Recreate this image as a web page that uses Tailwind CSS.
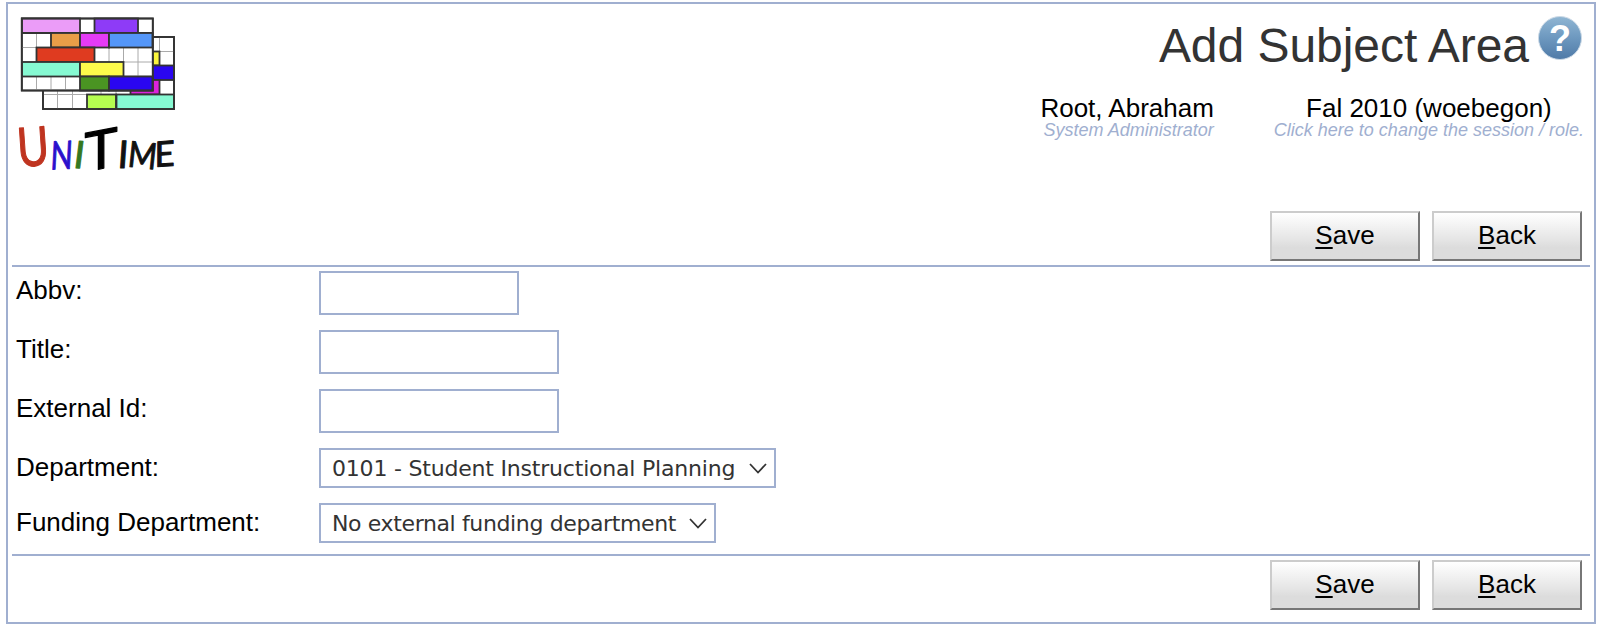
<!DOCTYPE html>
<html lang="en">
<head>
<meta charset="utf-8">
<title>Add Subject Area</title>
<script src="https://cdn.jsdelivr.net/npm/@tailwindcss/browser@4"></script>
</head>
<body class="bg-white font-['Liberation_Sans',Arial,sans-serif] text-[26px] leading-[30px] text-black">
<main class="ml-[6px] mt-[2px] flex h-[622px] w-[1590px] flex-col border-2 border-[#a0afd0] px-1">
  <header class="flex h-[207px] justify-between">
    <svg class="ml-[6px] mt-[10px] block h-[162px] w-[162px] overflow-visible" viewBox="18 14 162 162" role="img" aria-label="UniTime">
      <g stroke="#333" stroke-width="1.8">
        <rect x="43" y="37" width="131" height="72" fill="#fff"/>
        <path d="M57.5 91V109M72.5 91V109M101 91V95M116 91V95M43 94.500H174M159.500 37V109M152 51.500H174" stroke="#aaa" stroke-width="1"/>
        <rect x="145" y="51.500" width="14.500" height="14" fill="#fbf63c"/>
        <rect x="145" y="65.500" width="29" height="14.500" fill="#2a06f0"/>
        <rect x="130.500" y="80" width="29" height="14.500" fill="#dd22dc"/>
        <rect x="87" y="94.500" width="29" height="14.500" fill="#b6fd50"/>
        <rect x="116.500" y="94.500" width="57.500" height="14.500" fill="#86f9d2"/>
        <rect x="43" y="37" width="131" height="72" fill="none"/>
        <rect x="21.800" y="18.500" width="131" height="72" fill="#fff"/>
        <path d="M36.500 33V90M51 33V90M65.500 33V90M94.500 47V62M109 47V62M123.500 47V76M138 47V76M22 47.500H152M22 62H152M22 76H152" stroke="#aaa" stroke-width="1"/>
        <rect x="22" y="18.500" width="58" height="14.500" fill="#eb9cf8"/>
        <rect x="94.500" y="18.500" width="43.500" height="14.500" fill="#8e3bf7"/>
        <path d="M22 33H152"/>
        <rect x="51" y="33" width="29" height="14.500" fill="#e99e48"/>
        <rect x="80" y="33" width="29" height="14.500" fill="#e53bf6"/>
        <rect x="109" y="33" width="43.500" height="14.500" fill="#5496f8"/>
        <rect x="36.500" y="47.500" width="58" height="14.500" fill="#df3b20"/>
        <rect x="22" y="62" width="58" height="14.500" fill="#86f9d2"/>
        <rect x="80" y="62" width="43.500" height="14.500" fill="#fdfb4b"/>
        <rect x="80" y="76.500" width="29" height="14" fill="#4a9422"/>
        <rect x="109" y="76.500" width="43.500" height="14" fill="#2a06f0"/>
        <rect x="21.800" y="18.500" width="131" height="72" fill="none"/>
      </g>
      <g font-family="Lato, sans-serif" stroke-linejoin="round">
        <text x="0" y="0" font-size="54" transform="translate(18.500 167) rotate(-4) scale(.8 1)" fill="#bf3420" stroke="#bf3420" stroke-width="1.200">U</text>
        <text x="0" y="0" font-size="39" transform="translate(50 169.500) rotate(-2) skewX(-5) scale(.74 1)" fill="#2b10cc" stroke="#2b10cc" stroke-width="1">N</text>
        <text x="0" y="0" font-size="38" transform="translate(72.500 168) rotate(2) skewX(-5)" fill="#35781f" stroke="#35781f" stroke-width="1">I</text>
        <text x="0" y="0" font-size="54" transform="translate(84.500 172) skewY(-11) scale(1.040 1)" fill="#000" stroke="#000" stroke-width="1.200">T</text>
        <text x="0" y="0" font-size="38" transform="translate(117 168) skewX(-4)" fill="#111" stroke="#111" stroke-width="1">I</text>
        <text x="0" y="0" font-size="36" transform="translate(127 166.500) rotate(6) scale(.86 1)" fill="#111" stroke="#111" stroke-width="1">M</text>
        <text x="0" y="0" font-size="35" transform="translate(154.500 167) skewY(-4)" fill="#111" stroke="#111" stroke-width="1">E</text>
      </g>
    </svg>
    <div class="flex flex-col items-end pr-[6px]">
      <div class="flex h-[85px] pr-[2px]">
        <h1 class="mt-[14px] text-[48px] leading-[56px] tracking-[-0.05px] text-[#333]">Add Subject Area</h1>
        <svg class="ml-[9px] mt-[12px] size-[44px] overflow-visible" viewBox="0 0 44 44" aria-label="Help">
          <defs><linearGradient id="g" x2="0" y2="1"><stop stop-color="#90b6d3"/><stop offset=".5" stop-color="#6d98bf"/><stop offset="1" stop-color="#4f7aa7"/></linearGradient></defs>
          <circle cx="22" cy="22" r="21.500" fill="url(#g)" stroke="#cbd9e6"/>
          <text x="22" y="34.500" text-anchor="middle" font-family="Liberation Sans, sans-serif" font-weight="700" font-size="36" fill="#fff">?</text>
        </svg>
      </div>
      <div class="flex gap-[60px] text-center">
        <div class="flex flex-col items-center"><span class="mt-[4px]">Root, Abraham</span><i class="-mt-[3px] self-end text-[18px] leading-[20px] text-[#a0afd0]">System Administrator</i></div>
        <div class="flex flex-col items-center"><span class="mt-[4px]">Fal 2010 (woebegon)</span><i class="-mt-[3px] text-[18px] leading-[20px] text-[#a0afd0]">Click here to change the session / role.</i></div>
      </div>
    </div>
  </header>
  <div class="flex h-[56px] justify-end gap-3 border-b-2 border-[#a0afd0] pr-2">
    <button class="h-[50px] w-[150px] border-2 border-t-[#ccc] border-r-[#777] border-b-[#777] border-l-[#ccc] bg-linear-to-b from-white via-[#e4e4e4] via-60% to-[#dcdcdc] to-75% pb-[2px]"><span class="underline decoration-2 underline-offset-[3px]">S</span>ave</button>
    <button class="h-[50px] w-[150px] border-2 border-t-[#ccc] border-r-[#777] border-b-[#777] border-l-[#ccc] bg-linear-to-b from-white via-[#e4e4e4] via-60% to-[#dcdcdc] to-75% pb-[2px]"><span class="underline decoration-2 underline-offset-[3px]">B</span>ack</button>
  </div>
  <form class="grid grid-cols-[303px_1fr] grid-rows-[59px_59px_59px_55px_51px] border-b-2 border-[#a0afd0] pl-[4px] pt-1">
    <label for="abbv" class="pt-[4px]">Abbv:</label><input id="abbv" class="h-[44px] w-[200px] border-2 border-[#a0afd0]">
    <label for="ttl" class="pt-[4px]">Title:</label><input id="ttl" class="h-[44px] w-[240px] border-2 border-[#a0afd0]">
    <label for="ext" class="pt-[4px]">External Id:</label><input id="ext" class="h-[44px] w-[240px] border-2 border-[#a0afd0]">
    <label class="pt-[4px]">Department:</label>
    <div class="flex h-[40px] w-[457px] items-center justify-between border-2 border-[#a0afd0] pl-[11px] pr-[7px] font-['DejaVu_Sans',Verdana,sans-serif] text-[22px] tracking-[-0.2px] text-[#333]"><span class="whitespace-nowrap pt-[1px]">0101 - Student Instructional Planning</span><svg class="h-[11px] w-[18px] shrink-0" viewBox="0 0 18 11" fill="none" stroke="#333" stroke-width="1.800"><path d="M1 1l8 8.500L17 1"/></svg></div>
    <label class="pt-[4px]">Funding Department:</label>
    <div class="flex h-[40px] w-[397px] items-center justify-between border-2 border-[#a0afd0] pl-[11px] pr-[7px] font-['DejaVu_Sans',Verdana,sans-serif] text-[22px] tracking-[-0.37px] text-[#333]"><span class="whitespace-nowrap pt-[1px]">No external funding department</span><svg class="h-[11px] w-[18px] shrink-0" viewBox="0 0 18 11" fill="none" stroke="#333" stroke-width="1.800"><path d="M1 1l8 8.500L17 1"/></svg></div>
  </form>
  <div class="flex justify-end gap-3 pr-2 pt-1">
    <button class="h-[50px] w-[150px] border-2 border-t-[#ccc] border-r-[#777] border-b-[#777] border-l-[#ccc] bg-linear-to-b from-white via-[#e4e4e4] via-60% to-[#dcdcdc] to-75% pb-[2px]"><span class="underline decoration-2 underline-offset-[3px]">S</span>ave</button>
    <button class="h-[50px] w-[150px] border-2 border-t-[#ccc] border-r-[#777] border-b-[#777] border-l-[#ccc] bg-linear-to-b from-white via-[#e4e4e4] via-60% to-[#dcdcdc] to-75% pb-[2px]"><span class="underline decoration-2 underline-offset-[3px]">B</span>ack</button>
  </div>
</main>
</body>
</html>
